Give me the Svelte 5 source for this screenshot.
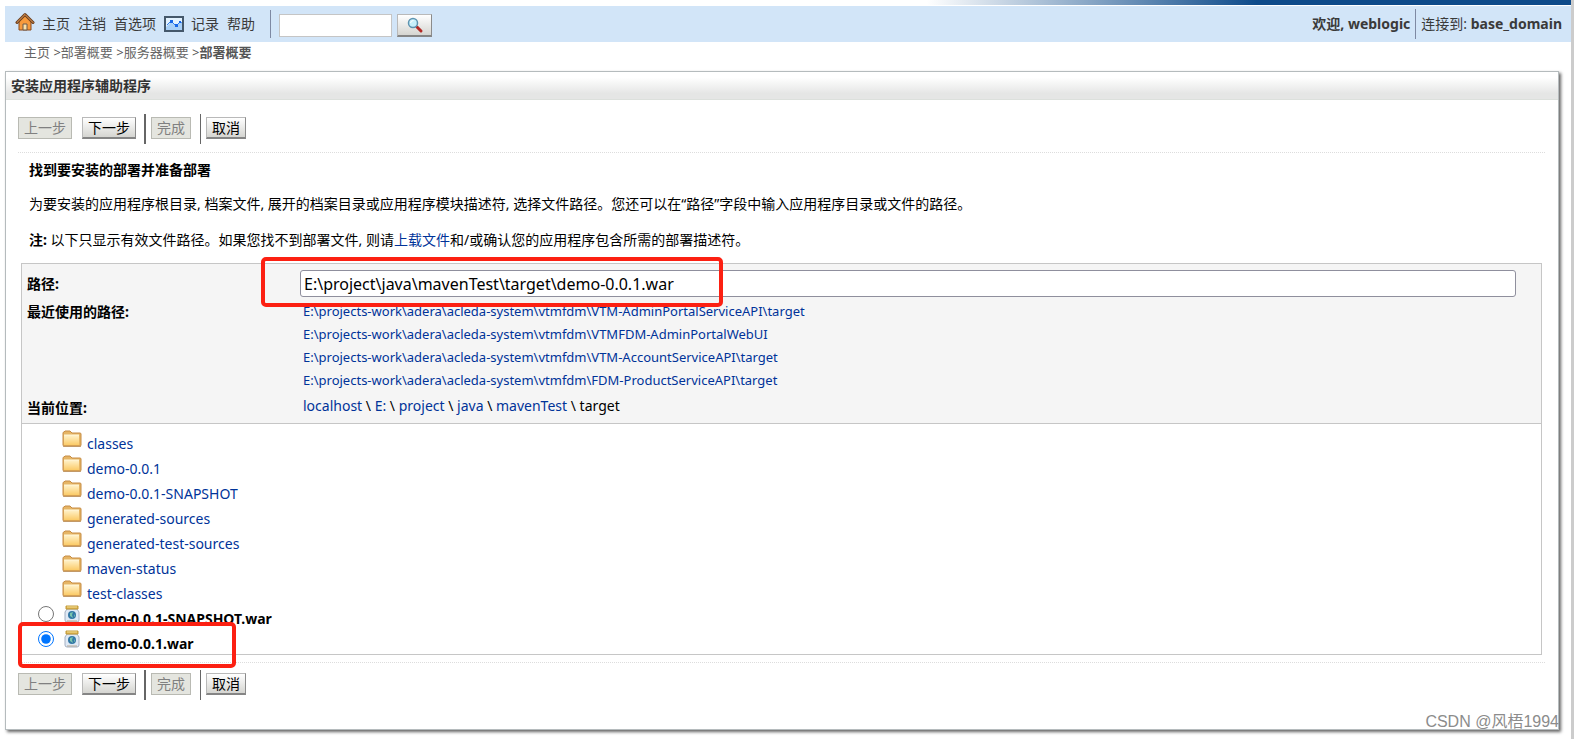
<script>
    let path = $state("E:\\project\\java\\mavenTest\\target\\demo-0.0.1.war");
    let selected = $state("demo-0.0.1.war");
    let search = $state("");

    const crumbs = ["主页", "部署概要", "服务器概要"];
    const recent = [
        "E:\\projects-work\\adera\\acleda-system\\vtmfdm\\VTM-AdminPortalServiceAPI\\target",
        "E:\\projects-work\\adera\\acleda-system\\vtmfdm\\VTMFDM-AdminPortalWebUI",
        "E:\\projects-work\\adera\\acleda-system\\vtmfdm\\VTM-AccountServiceAPI\\target",
        "E:\\projects-work\\adera\\acleda-system\\vtmfdm\\FDM-ProductServiceAPI\\target",
    ];
    const location = ["localhost", "E:", "project", "java", "mavenTest"];
    const folders = [
        "classes",
        "demo-0.0.1",
        "demo-0.0.1-SNAPSHOT",
        "generated-sources",
        "generated-test-sources",
        "maven-status",
        "test-classes",
    ];
    const archives = ["demo-0.0.1-SNAPSHOT.war", "demo-0.0.1.war"];
</script>

{#snippet buttons()}
    <div class="buttons">
        <button disabled>上一步</button>
        <button class="next">下一步</button>
        <span class="sep thick"></span>
        <button disabled>完成</button>
        <span class="sep"></span>
        <button>取消</button>
    </div>
{/snippet}

<div class="page">
    <div class="strip"></div>
    <header>
        <nav>
            <a href="#home" class="home">
                <svg width="20" height="20" viewBox="0 0 20 20">
                    <path d="M4 9v9h12V9l-6-6z" fill="#f79a3c" stroke="#8a4a1c" />
                    <path d="M8 18v-6h4v6z" fill="#fbe0a8" stroke="#6b5a4c" />
                    <path d="M2 10.500 10 2.500l8 8" fill="none" stroke="#6b3f1f" stroke-width="3" stroke-linejoin="round" stroke-linecap="round" />
                    <path d="m2 10.500 8-8 8 8" fill="none" stroke="#f0a35c" stroke-linecap="round" />
                </svg>
                主页
            </a>
            <a href="#logout">注销</a>
            <a href="#prefs">首选项</a>
            <a href="#record" class="record">
                <svg width="20" height="16" viewBox="0 0 20 16">
                    <rect x="1" y="1" width="18" height="14" fill="#e3f2ff" stroke="#45586b" stroke-width="2" />
                    <path d="M2 11 7 6l5 4 4-4 2 2v6H2z" fill="#a9d0f7" />
                    <path d="m3 9 4-4 5 5 4-4 2 1" fill="none" stroke="#2f7df0" />
                    <path d="M6 4h3v3H6zM11 8h3v3h-3zM15 5h2v2h-2z" fill="#1767e8" />
                </svg>
                记录
            </a>
            <a href="#help">帮助</a>
        </nav>
        <form class="search" onsubmit={(e) => e.preventDefault()}>
            <input type="text" aria-label="搜索" bind:value={search} />
            <button aria-label="搜索">
                <svg width="18" height="18" viewBox="0 0 18 18">
                    <path d="m11 11 4 4" stroke="#b22a26" stroke-width="3" stroke-linecap="round" />
                    <circle cx="7" cy="7" r="4.500" fill="#c8f0fb" stroke="#5d93b0" stroke-width="1.500" />
                    <path d="M4.500 7q.5-2.500 3-2.500" fill="none" stroke="#fff" />
                </svg>
            </button>
        </form>
        <div class="user"><b>欢迎, weblogic</b></div>
        <div class="domain">连接到: <b>base_domain</b></div>
    </header>

    <div class="crumbs">
        {#each crumbs as c}<a href="#crumb">{c}</a> &gt;{/each}<b>部署概要</b>
    </div>

    <main>
        <h1>安装应用程序辅助程序</h1>
        <div class="body">
            {@render buttons()}
            <section>
                <h2>找到要安装的部署并准备部署</h2>
                <p>为要安装的应用程序根目录, 档案文件, 展开的档案目录或应用程序模块描述符, 选择文件路径。您还可以在<q>路径</q>字段中输入应用程序目录或文件的路径。</p>
                <p><b>注:</b> 以下只显示有效文件路径。如果您找不到部署文件, 则请<a href="#upload">上载文件</a>和/或确认您的应用程序包含所需的部署描述符。</p>

                <div class="chooser">
                    <div class="paths">
                        <label for="path">路径:</label>
                        <div class="field">
                            <input id="path" type="text" bind:value={path} />
                            <span class="mark"></span>
                        </div>
                        <b>最近使用的路径:</b>
                        <ul>
                            {#each recent as r}
                                <li><a href="#recent">{r}</a></li>
                            {/each}
                        </ul>
                        <b>当前位置:</b>
                        <div class="here">
                            {#each location as l}<a href="#dir">{l}</a>{" \\ "}{/each}target
                        </div>
                    </div>
                    <div class="files">
                        {#each folders as f}
                            <div class="row">
                                <span class="pick"></span>
                                <svg class="icon" width="20" height="18" viewBox="0 0 20 18">
                                    <path d="M1 15V3q0-1 1-1l1-1h5l2 2h8q1 0 1 1v11q0 1-1 1H2q-1 0-1-1z" fill="#e6b565" stroke="#c68c45" />
                                    <path d="M2 15V5h15v10z" fill="url(#fold)" />
                                    <path d="M2 5h15" stroke="#fff6d8" />
                                    <path d="M1 16.500h18" stroke="#ad7c43" opacity=".6" />
                                </svg>
                                <a href="#folder">{f}</a>
                            </div>
                        {/each}
                        {#each archives as a, i}
                            <div class="row">
                                <span class="pick">
                                    <input type="radio" id="war{i}" name="war" value={a} bind:group={selected} />
                                </span>
                                <svg class="icon" width="20" height="18" viewBox="0 0 20 18">
                                    <path d="M5 4h10l2 3v8q0 2-2 2H5q-2 0-2-2V7z" fill="#dfe9f5" stroke="#a3afc2" />
                                    <path d="M4 1h12v3H4z" fill="#d9b04c" stroke="#c39a3b" />
                                    <path d="M5 2h10" stroke="#f3dc92" />
                                    <circle cx="10" cy="10" r="4" fill="#3278a5" />
                                    <path d="m8 8 3-1-1 3 1 3-3-2zM12 9l1 2-1 1z" fill="#79c4ad" />
                                    <path d="M5 16h10" stroke="#b9aa95" />
                                </svg>
                                <label for="war{i}">{a}</label>
                            </div>
                        {/each}
                        <span class="mark"></span>
                    </div>
                </div>
            </section>
            {@render buttons()}
        </div>
    </main>
    <div class="watermark">CSDN @风梧1994</div>
</div>

<svg class="defs" width="0" height="0" aria-hidden="true">
    <linearGradient id="fold" x2="0" y2="1">
        <stop offset="0" stop-color="#fff3cc" />
        <stop offset="1" stop-color="#fbcb68" />
    </linearGradient>
</svg>

<style>
    :global(body) {
        background: #fff;
    }
    .page {
        position: relative;
        border-right: 3px solid #ccc;
        padding: 0 0 9px 5px;
        font: 14px/20px Tahoma, "Noto Sans", "Noto Sans CJK SC", sans-serif;
        color: #000;
    }
    a {
        color: #039;
        text-decoration: none;
    }
    .strip {
        height: 5px;
        margin: 0 0 1px -5px;
        background: linear-gradient(to right, #fff 59%, #0d4a8a 80%);
    }
    header {
        display: flex;
        align-items: center;
        height: 36px;
        padding-right: 9px;
        background: #d2e5f8;
        color: #3a3a3a;
    }
    header a {
        color: #3a3a3a;
    }
    nav {
        display: flex;
        gap: 8px;
        padding: 0 15px 0 10px;
        border-right: 1px solid #7e89a3;
        line-height: 28px;
    }
    nav a {
        display: flex;
        align-items: center;
        gap: 7px;
    }
    .home svg {
        margin-bottom: 4px;
    }
    .search {
        display: flex;
        gap: 5px;
        margin: 2px auto 0 8px;
    }
    .search input {
        box-sizing: border-box;
        width: 113px;
        height: 23px;
        border: 1px solid #c5c5c5;
        background: #fff;
    }
    .search button {
        display: flex;
        align-items: center;
        justify-content: center;
        width: 35px;
        height: 23px;
        padding: 0;
    }
    .user {
        padding-right: 5px;
        border-right: 1px solid #7e89a3;
        line-height: 30px;
    }
    .domain {
        padding-left: 5px;
    }
    .crumbs {
        padding: 0 0 9px 19px;
        font-size: 13px;
        color: #555;
    }
    .crumbs a {
        color: #666;
    }
    main {
        margin-right: 12px;
        border: 1px solid #b5bbbd;
        box-shadow: 2px 2px 3px #666;
    }
    h1,
    h2 {
        margin: 0;
        font-size: 14px;
        font-weight: bold;
    }
    h1 {
        padding: 4px 5px 3px;
        border-bottom: 1px solid #dce0dc;
        background: linear-gradient(#fff 20%, #e5e6e5 80%);
        color: #333;
    }
    .body {
        padding: 14px 13px 29px 12px;
    }
    .buttons {
        display: flex;
        align-items: center;
        height: 30px;
    }
    .buttons button {
        margin-bottom: 2px;
    }
    button {
        box-sizing: border-box;
        height: 22px;
        padding: 0 5px;
        border: 1px solid #b9b9b9;
        border-right-color: #8b8b8b;
        border-bottom: 2px solid #858585;
        background: linear-gradient(#fff, #d5d5d1);
        font: inherit;
        line-height: 18px;
        color: #000;
    }
    button:disabled {
        border: 1px solid #b9bab3;
        background: #e4e5df;
        color: #808080;
    }
    .next {
        margin-left: 10px;
    }
    .sep {
        width: 1px;
        height: 30px;
        margin: 0 5px 0 9px;
        background: #666;
    }
    .thick {
        width: 2px;
        margin-left: 8px;
    }
    section {
        margin: 8px 0 7px;
        padding: 7px 3px;
        border: dotted #ddd;
        border-width: 1px 0;
    }
    h2,
    p {
        padding-left: 8px;
    }
    p {
        margin: 14px 0 16px;
    }
    p + p {
        margin-bottom: 13px;
    }
    q {
        quotes: "“" "”";
    }
    .chooser {
        border: 1px solid #c6c6c6;
    }
    .paths {
        display: grid;
        grid-template-columns: 273px 1fr;
        padding: 6px 25px 5px 5px;
        border-bottom: 1px solid #c6c6c6;
        background: #f5f5f5;
    }
    .paths > label {
        font-weight: bold;
        line-height: 28px;
    }
    .field {
        position: relative;
    }
    .field input {
        box-sizing: border-box;
        display: block;
        width: 100%;
        height: 27px;
        padding: 0 3px;
        border: 1px solid #8f8f9d;
        border-radius: 3px;
        background: #fff;
        font: inherit;
        font-size: 16px;
    }
    .paths > b {
        padding-top: 4px;
    }
    ul {
        margin: 0;
        padding: 2px 0 2px 3px;
        list-style: none;
        font-size: 13px;
        line-height: 23px;
    }
    .here {
        padding: 2px 0 0 3px;
    }
    .files {
        position: relative;
        padding: 4px 0 1px 12px;
    }
    .row {
        display: flex;
        height: 25px;
    }
    .pick {
        width: 27px;
    }
    .pick input {
        width: 16px;
        height: 16px;
        margin: 3px 4px;
    }
    .icon {
        margin: 2px 5px 0 1px;
    }
    .row a,
    .row label {
        padding-top: 6px;
    }
    .row label {
        font-weight: bold;
    }
    /* red highlight frames over the form */
    .mark {
        position: absolute;
        box-sizing: border-box;
        border: 4px solid #fc2012;
        border-radius: 5px;
        pointer-events: none;
    }
    .field .mark {
        top: -13px;
        left: -39px;
        width: 462px;
        height: 50px;
    }
    .files .mark {
        bottom: -14px;
        left: -4px;
        width: 218px;
        height: 46px;
    }
    .watermark {
        position: absolute;
        right: 12px;
        bottom: 7px;
        font: 16px/20px "Liberation Sans", "Noto Sans CJK SC", sans-serif;
        color: #8c8c8c;
    }
    .defs {
        position: absolute;
    }
</style>
